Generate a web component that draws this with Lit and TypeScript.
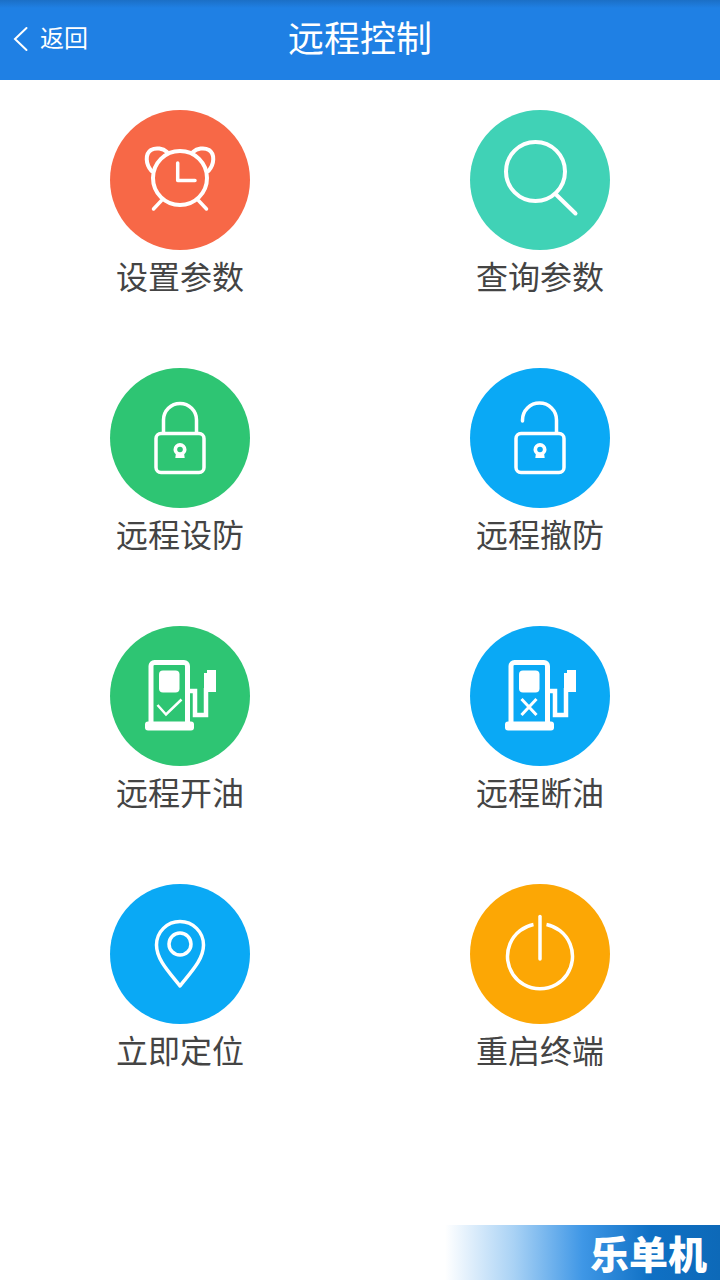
import { LitElement, css, html, svg } from 'lit';
import { customElement } from 'lit/decorators.js';

const lockBody = svg`
  <rect x="46" y="65.500" width="48" height="39" rx="5" />
  <path class="solid" d="M70 75a6.500 6.500 0 0 1 6.500 6.500c0 2.200-1 3.600-2.300 4.700l.5 3.800h-9.400l.5-3.800c-1.300-1.100-2.300-2.500-2.300-4.700a6.500 6.500 0 0 1 6.500-6.500z" />
  <circle class="hole" cx="70" cy="81.500" r="2.800" />
`;

const pumpBase = svg`
  <path d="M41 96V40a3.500 3.500 0 0 1 3.500-3.500h29.500a3.500 3.500 0 0 1 3.500 3.500v56" stroke-width="5" />
  <rect class="solid" x="35" y="95.500" width="49" height="9" rx="3" />
  <rect class="solid" x="49" y="44.500" width="20.500" height="22" rx="4" />
  <path d="M79 65h6v24h11V62" stroke-width="4.500" />
  <path class="solid" d="M94 47h3v-3h9v22H94z" />
`;

const icons = {
  clock: svg`
    <circle cx="70" cy="68" r="27" stroke-width="4" />
    <path d="M67.700 53v17.500H85M51.500 90.500l-8 8.500M88.500 90.500l8 8.500" stroke-linecap="round" stroke-linejoin="round" />
    <path d="M41.500 61C35.500 54 35 44 41 40c5-3 12-1.500 16 2M98.500 61c6-7 6.500-17 .5-21-5-3-12-1.500-16 2" stroke-width="4" stroke-linecap="round" />
  `,
  search: svg`
    <circle cx="65.500" cy="61.500" r="29.500" stroke-width="4" />
    <path d="M86 84.500l19.500 19" stroke-width="4" stroke-linecap="round" />
  `,
  lock: svg`
    ${lockBody}
    <path d="M53.500 65V52a16.500 16.500 0 0 1 33 0v13" />
  `,
  unlock: svg`
    ${lockBody}
    <path d="M52.500 53v-1a17 17 0 0 1 34 0v13" stroke-linecap="round" />
  `,
  pumpOn: svg`
    ${pumpBase}
    <path d="M47.500 79l8.500 9.500L71.500 73.500" stroke-width="2.500" />
  `,
  pumpOff: svg`
    ${pumpBase}
    <path d="M51.500 73l15 16M66.500 73l-15 16" stroke-width="3" />
  `,
  pin: svg`
    <path d="M70 102C60 89 46.500 76 46.500 61a23.500 23.500 0 0 1 47 0C93.500 76 80 89 70 102z" stroke-linejoin="round" />
    <circle cx="70" cy="60" r="11" />
  `,
  power: svg`
    <path d="M76.500 40.500a32.500 32.500 0 1 1-13 0" />
    <path d="M70 32.500v42.500" stroke-linecap="round" />
  `,
};

const items = [
  { label: '设置参数', color: '#f76847', icon: icons.clock },
  { label: '查询参数', color: '#40d2b6', icon: icons.search },
  { label: '远程设防', color: '#2ec573', icon: icons.lock },
  { label: '远程撤防', color: '#0aa9f5', icon: icons.unlock },
  { label: '远程开油', color: '#2ec573', icon: icons.pumpOn },
  { label: '远程断油', color: '#0aa9f5', icon: icons.pumpOff },
  { label: '立即定位', color: '#0aa9f5', icon: icons.pin },
  { label: '重启终端', color: '#fca705', icon: icons.power },
];

@customElement('app-root')
export class AppRoot extends LitElement {
  static styles = css`
    :host {
      display: flex;
      flex-direction: column;
      height: 1280px;
      background: #fff;
      font-family: 'Noto Sans CJK SC', sans-serif;
      overflow: hidden;
    }
    .bar {
      display: grid;
      grid-template-columns: 1fr auto 1fr;
      align-items: center;
      height: 80px;
      padding-bottom: 6px;
      box-sizing: border-box;
      background: linear-gradient(#1b6fc6 0, #1f80e4 8px);
      color: #fff;
    }
    .back {
      display: flex;
      align-items: center;
      gap: 12px;
      padding-left: 13px;
      font-size: 24px;
      line-height: 32px;
    }
    .back svg {
      display: block;
      flex: none;
      margin-top: 4px;
    }
    .title {
      font-size: 36px;
      line-height: 48px;
      margin-bottom: 2px;
    }
    .grid {
      display: grid;
      grid-template-columns: 1fr 1fr;
      grid-auto-rows: 258px;
      padding-top: 30px;
    }
    .cell {
      display: flex;
      flex-direction: column;
      align-items: center;
    }
    .circle {
      width: 140px;
      height: 140px;
      border-radius: 50%;
    }
    .circle svg {
      display: block;
      fill: none;
      stroke: #fff;
      stroke-width: 3.500;
    }
    .circle .solid {
      fill: #fff;
      stroke: none;
    }
    .circle .hole {
      fill: var(--tint);
      stroke: none;
    }
    .label {
      margin-top: 4px;
      font-size: 32px;
      line-height: 42px;
      color: #444;
    }
    .brand {
      margin-top: auto;
      margin-left: 445px;
      height: 55px;
      padding-right: 13px;
      display: flex;
      align-items: center;
      justify-content: flex-end;
      background: linear-gradient(90deg, #fff 0, #a9d2f5 25%, #3f97e6 50%, #0f70c4 75%, #0d69b8 100%);
      color: #fff;
      font-size: 39px;
      line-height: 55px;
      font-weight: 900;
    }
  `;

  render() {
    return html`
      <div class="bar">
        <div class="back">
          <svg width="15" height="26" viewBox="0 0 15 26" fill="none" stroke="#fff" stroke-width="2" stroke-linecap="round">
            <path d="M13.500 2L2 13l11.500 11" />
          </svg>
          <span>返回</span>
        </div>
        <div class="title">远程控制</div>
      </div>
      <div class="grid">
        ${items.map(
          (item) => html`
            <div class="cell">
              <div class="circle" style="background:${item.color};--tint:${item.color}">
                <svg width="140" height="140" viewBox="0 0 140 140">${item.icon}</svg>
              </div>
              <div class="label">${item.label}</div>
            </div>
          `,
        )}
      </div>
      <div class="brand">乐单机</div>
    `;
  }
}
